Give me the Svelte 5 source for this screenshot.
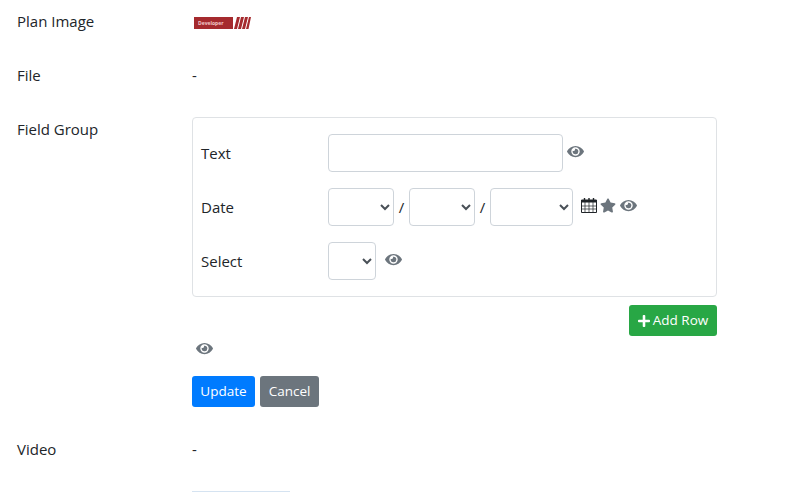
<script>
  const eye =
    "M572.52 241.4C518.29 135.59 410.93 64 288 64S57.68 135.64 3.48 241.41a32.35 32.35 0 0 0 0 29.19C57.71 376.41 165.07 448 288 448s230.32-71.64 284.52-177.41a32.35 32.35 0 0 0 0-29.19zM288 400a144 144 0 1 1 144-144 143.93 143.93 0 0 1-144 144zm0-240a95.31 95.31 0 0 0-25.31 3.79 47.85 47.85 0 0 1-66.9 66.9A95.78 95.78 0 1 0 288 160z";
  const star =
    "M259.3 17.8L194 150.2 47.9 171.5c-26.2 3.8-36.7 36.1-17.7 54.6l105.7 103-25 145.5c-4.5 26.3 23.2 46 46.4 33.7L288 439.6l130.7 68.7c23.2 12.2 50.9-7.4 46.4-33.7l-25-145.5 105.7-103c19-18.5 8.5-50.8-17.7-54.6L382 150.2 316.7 17.8c-11.7-23.6-45.6-23.9-57.4 0z";
  const plus =
    "M416 208H272V64c0-17.67-14.33-32-32-32h-32c-17.67 0-32 14.33-32 32v144H32c-17.67 0-32 14.33-32 32v32c0 17.67 14.33 32 32 32h144v144c0 17.67 14.33 32 32 32h32c17.67 0 32-14.33 32-32V304h144c17.67 0 32-14.33 32-32v-32c0-17.67-14.33-32-32-32z";
</script>

{#snippet eyeIcon()}
  <svg class="icon eye" viewBox="0 0 576 512"><path d={eye} /></svg>
{/snippet}

<div class="page">
  <div class="row">
    <div class="label">Plan Image</div>
    <div class="value">
      <svg class="plan" viewBox="0 0 58 14">
        <rect x="0" y="1" width="39" height="12" fill="#a52a2e" />
        <text x="4" y="9" class="plan-text">Developer</text>
        <path d="M40 13L43 1h3L43 13zM44 13L47 1h3L47 13zM48 13L51 1h3L51 13zM52 13L55 1h2L54.500 13z" fill="#a52a2e" />
      </svg>
    </div>
  </div>

  <div class="row">
    <div class="label">File</div>
    <div class="value">-</div>
  </div>

  <div class="row">
    <div class="label">Field Group</div>
    <div class="group">
      <div class="card">
        <div class="field">
          <div class="field-label">Text</div>
          <input class="input" type="text" />
          {@render eyeIcon()}
        </div>
        <div class="field">
          <div class="field-label">Date</div>
          <select class="select day"></select>
          <span class="slash">/</span>
          <select class="select day"></select>
          <span class="slash">/</span>
          <select class="select year"></select>
          <svg class="icon cal" viewBox="0 0 16 16">
            <path d="M0.5 3h15v12.500H0.500z" fill="none" stroke="#212529" />
            <path d="M0 3h16v2.500H0z" fill="#212529" />
            <path d="M0.500 9h15M0.500 12h15M4 5v10M8 5v10M12 5v10" stroke="#212529" stroke-width="0.700" />
            <path d="M3.500 4V1M8 4V1M12.500 4V1" stroke="#212529" stroke-width="1.400" />
          </svg>
          <svg class="icon star" viewBox="0 0 576 512"><path d={star} /></svg>
          {@render eyeIcon()}
        </div>
        <div class="field select-field">
          <div class="field-label">Select</div>
          <select class="select small"></select>
          {@render eyeIcon()}
        </div>
      </div>

      <div class="add-wrap">
        <button class="btn success">
          <svg class="plus" viewBox="0 0 448 512"><path d={plus} /></svg>
          Add Row
        </button>
      </div>

      <div class="group-eye">{@render eyeIcon()}</div>

      <div class="actions">
        <button class="btn primary">Update</button>
        <button class="btn secondary">Cancel</button>
      </div>
    </div>
  </div>

  <div class="row">
    <div class="label">Video</div>
    <div class="value">-</div>
  </div>

  <div class="row">
    <div class="label"></div>
    <div class="stub"></div>
  </div>
</div>

<style>
  :global(body) {
    background: #fff;
  }
  .page {
    height: 492px;
    overflow: hidden;
    padding: 3px 0 0 17px;
    box-sizing: border-box;
    font-family: "Open Sans", Roboto, sans-serif;
    font-size: 15px;
    line-height: 24px;
    color: #212529;
  }
  .row {
    display: flex;
    margin-bottom: 16px;
  }
  .label {
    width: 175px;
    flex: none;
    padding: 6px 0 8px;
  }
  .value {
    padding: 6px 0 8px;
    height: 24px;
    display: flex;
    align-items: center;
  }
  .plan {
    width: 58px;
    height: 14px;
    margin-left: 2px;
    margin-top: 4px;
    display: block;
  }
  .plan-text {
    font-size: 5px;
    font-weight: 700;
    fill: #f3c9c9;
  }
  .group {
    width: 525px;
    padding-top: 6px;
    margin-bottom: 8px;
  }
  .card {
    border: 1px solid #dfe2e5;
    border-radius: 4px;
    padding: 16px 8px 0;
    height: 180px;
    box-sizing: border-box;
  }
  .field {
    display: flex;
    align-items: center;
    height: 38px;
    margin-bottom: 16px;
  }
  .field-label {
    width: 127px;
    flex: none;
  }
  .input,
  .select {
    height: 38px;
    box-sizing: border-box;
    border: 1px solid #ced4da;
    border-radius: 4px;
    background: #fff;
    padding: 6px 4px;
    font-size: 16px;
    color: #495057;
    flex: none;
  }
  .input {
    width: 235px;
  }
  .day {
    width: 66px;
  }
  .year {
    width: 83px;
  }
  .small {
    width: 48px;
  }
  .slash {
    width: 15px;
    text-align: center;
    color: #212529;
  }
  .icon {
    flex: none;
    display: block;
    fill: #6c757d;
    margin-top: -4px;
  }
  .eye {
    width: 17px;
    height: 15px;
    margin-left: 4px;
  }
  .select-field .eye {
    margin-left: 9px;
  }
  .cal {
    width: 16px;
    height: 16px;
    margin-left: 8px;
    margin-top: -4px;
  }
  .star {
    width: 16px;
    height: 15px;
    margin-left: 3px;
  }
  .add-wrap {
    display: flex;
    justify-content: flex-end;
    margin-top: 8px;
  }
  .group-eye {
    height: 24px;
    padding-top: 1px;
    display: flex;
    align-items: center;
  }
  .group-eye .eye {
    margin: -2px 0 0 4px;
  }
  .actions {
    display: flex;
    gap: 5px;
    margin-top: 15px;
  }
  .btn {
    height: 31px;
    border: none;
    border-radius: 3px;
    padding: 0 9px;
    color: #fff;
    font-family: inherit;
    font-size: 13.500px;
    line-height: 21px;
    display: flex;
    align-items: center;
    justify-content: center;
  }
  .success {
    background: #28a745;
    width: 88px;
    padding: 0;
    gap: 3px;
  }
  .primary {
    background: #007bff;
    width: 63px;
    padding: 0;
  }
  .secondary {
    background: #6c757d;
    width: 59px;
    padding: 0;
  }
  .plus {
    width: 12px;
    height: 14px;
    fill: #fff;
  }
  .stub {
    width: 98px;
    height: 24px;
    border-top: 1px solid #d5e3f1;
    margin-top: 6px;
  }
</style>
